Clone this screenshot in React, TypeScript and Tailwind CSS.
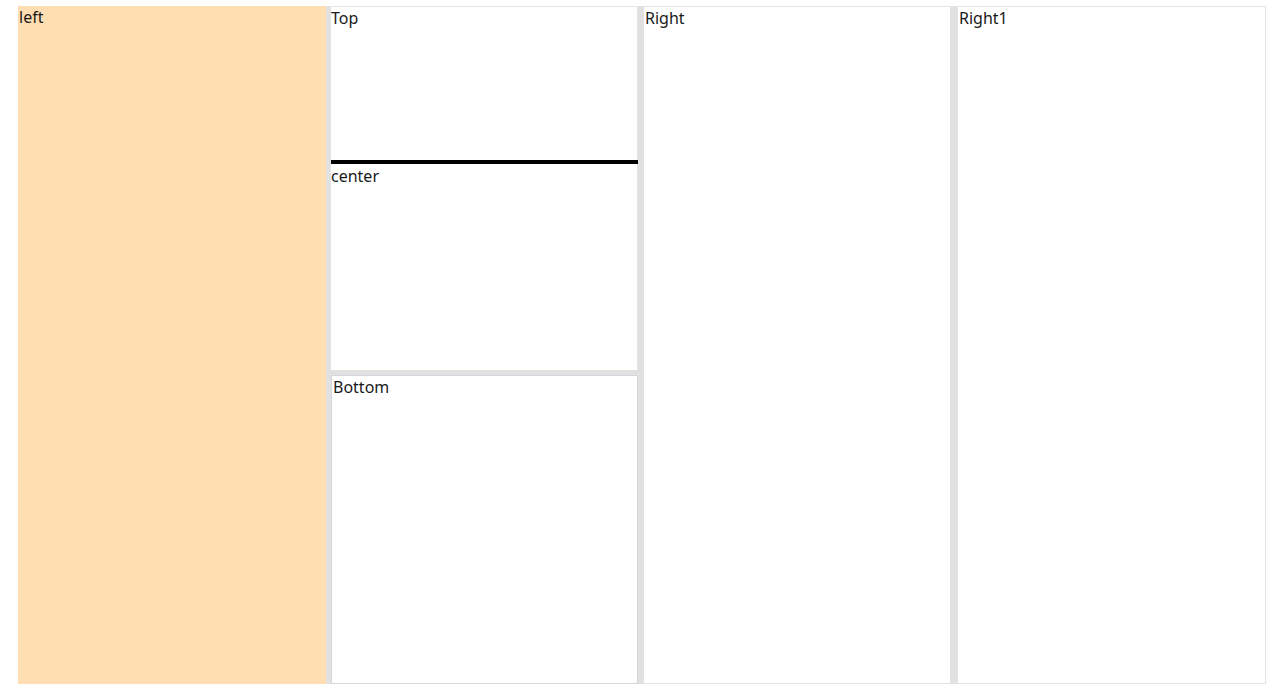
export default function App() {
  return (
    <div className="w-[1280px] h-[695px] bg-white pt-[6px] pl-[18px] font-['Noto_Sans',sans-serif] text-[16px] leading-[22px] text-[#1a1a1a]">
      <div className="flex w-[1248px] h-[678px]">
        <div className="w-[308px] bg-[#ffdfb2] px-px">left</div>
        <div className="w-[5px] bg-[#e1e1e1]" />
        <div className="w-[307px] flex flex-col">
          <div className="h-[154px] border-t border-r border-[#e3e3e3] bg-white">Top</div>
          <div className="h-[4px] bg-black" />
          <div className="flex-1 border-r border-[#e3e3e3] bg-white pt-px">center</div>
          <div className="h-[5px] bg-[#e1e1e1]" />
          <div className="h-[309px] border border-[#d6d6e0] bg-white px-px">Bottom</div>
        </div>
        <div className="w-[6px] bg-[#e1e1e1]" />
        <div className="w-[307px] border-y border-r border-[#e3e3e3] bg-white pl-px">Right</div>
        <div className="w-[6px] bg-[#e1e1e1]" />
        <div className="flex-1 border border-[#e3e3e3] bg-white pl-px">Right1</div>
      </div>
    </div>
  );
}
